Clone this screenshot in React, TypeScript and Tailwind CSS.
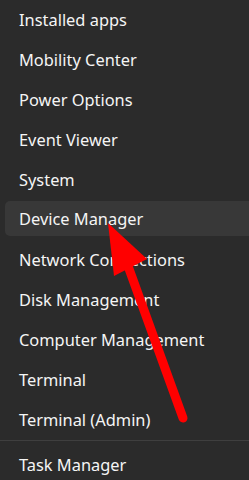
const items = [
  "Installed apps",
  "Mobility Center",
  "Power Options",
  "Event Viewer",
  "System",
  "Device Manager",
  "Network Connections",
  "Disk Management",
  "Computer Management",
  "Terminal",
  "Terminal (Admin)",
];

function MenuItem({ label, active }: { label: string; active?: boolean }) {
  if (active) {
    return (
      <div className="h-10 pt-px pb-1 pl-[5px]">
        <div className="flex h-full items-center rounded-l-[5px] bg-[#383838] pl-[14px] pt-[2px]">{label}</div>
      </div>
    );
  }
  return <div className="flex h-10 items-center pl-[19px]">{label}</div>;
}

function Arrow() {
  return (
    <svg className="pointer-events-none absolute left-0 top-0" width="249" height="480" viewBox="0 0 249 480">
      <line x1="128" y1="266" x2="183" y2="418" stroke="#ff0000" strokeWidth="9" strokeLinecap="round" />
      <polygon points="108,223 147,259 114,276" fill="#ff0000" />
    </svg>
  );
}

export default function App() {
  return (
    <div className="relative h-[480px] w-[249px] overflow-hidden bg-[#2b2b2b] text-[16.4px] text-[#f5f5f5] font-['Noto_Sans',sans-serif]">
      {items.map((item) => (
        <MenuItem key={item} label={item} active={item === "Device Manager"} />
      ))}
      <div className="mb-1 h-px bg-[#3f3f3f]" />
      <MenuItem label="Task Manager" />
      <Arrow />
    </div>
  );
}
